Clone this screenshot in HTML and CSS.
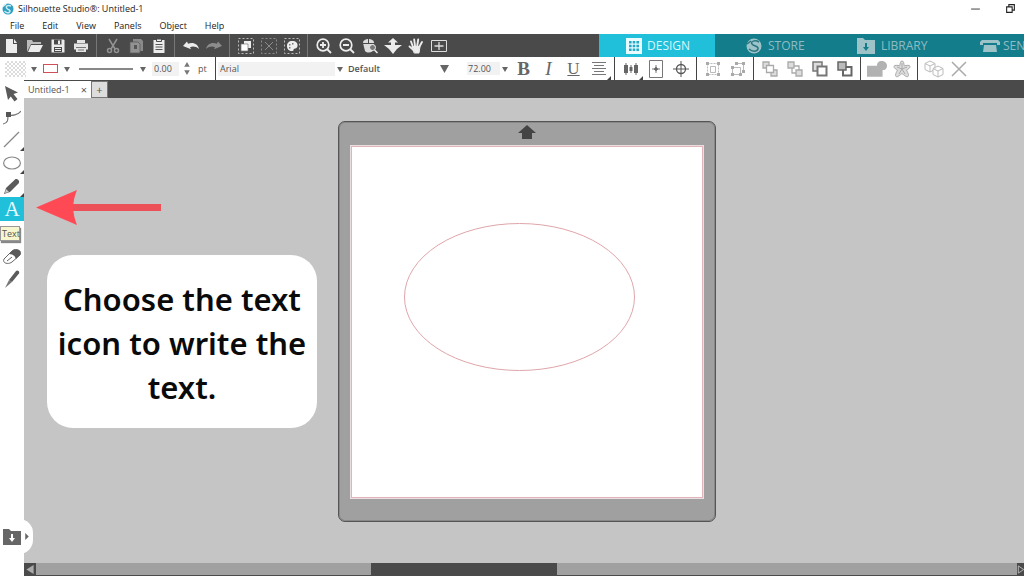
FILE: index.html
```html
<!DOCTYPE html>
<html lang="en">
<head>
<meta charset="utf-8">
<title>Silhouette Studio®: Untitled-1</title>
<link rel="stylesheet" href="styles.css">
</head>
<body>
<div class="app">
  <header class="titlebar">
    <svg class="app-logo" viewBox="0 0 12 12"><circle cx="6" cy="6" r="5.5" fill="#2e9fc0"/><path d="M9 3C6 1.500 3 3.500 5 5.500S9 7 7.500 9 3.500 9 2.500 8" fill="none" stroke="#c9edf5" stroke-width="1.500"/><path d="M1 3.500L4 1" stroke="#d7f1f7" stroke-width="1.500"/></svg>
    <h1 class="app-title">Silhouette Studio®: Untitled-1</h1>
    <div class="window-controls">
      <button class="window-button" aria-label="Minimize"><svg viewBox="0 0 10 10"><path d="M1 5.500h8" stroke="#555"/></svg></button>
      <button class="window-button" aria-label="Restore"><svg viewBox="0 0 10 10" fill="none" stroke="#222"><path d="M1.500 3.500h5v5h-5zM3.500 3V1.500h5v5H7"/></svg></button>
    </div>
  </header>

  <nav class="menubar">
    <button>File</button><button>Edit</button><button>View</button><button>Panels</button><button>Object</button><button>Help</button>
  </nav>

  <div class="toolbar">
    <div class="toolbar-group">
      <button class="tool-button" aria-label="New"><svg viewBox="0 0 16 16" fill="#ececec"><path d="M2 1h7v5h4v9H2z"/><path d="M10 1l3 4h-3z"/></svg></button>
      <button class="tool-button" aria-label="Open"><svg viewBox="0 0 16 16"><path d="M0 14V2h5l1 2h8v2H4z" fill="#bbb"/><path d="M4 7h12l-3.500 7H1z" fill="#ececec"/></svg></button>
      <button class="tool-button" aria-label="Save"><svg viewBox="0 0 16 16"><path d="M1.500 1.500h12l1 1v12h-13z" fill="#ececec"/><path d="M4 1.500h7.500v5H4zM4 9h8v5H4z" fill="#4a4a4a"/><path d="M8 2.500h2V6H8zM5 10h6v1H5zm0 2h6v1H5z" fill="#ececec"/></svg></button>
      <button class="tool-button" aria-label="Print"><svg viewBox="0 0 16 16"><path d="M4 2h8v3H4zM1 5.500h14v6h-2V14H3v-2.500H1z" fill="#e4e4e4"/><path d="M3 9.500h10M5 12h6" stroke="#777"/></svg></button>
    </div>
    <div class="toolbar-group">
      <button class="tool-button" aria-label="Cut"><svg viewBox="0 0 16 16" fill="none" stroke="#929292" stroke-width="1.500"><path d="M4 1l6 10M12 1L6 11"/><circle cx="4.500" cy="12.500" r="2"/><circle cx="11.500" cy="12.500" r="2"/></svg></button>
      <button class="tool-button" aria-label="Copy"><svg viewBox="0 0 16 16"><path d="M5 1h8l2 2v10H5z" fill="#8a8a8a"/><path d="M2 4h8l2 2v9H2z" fill="#929292" stroke="#5a5a5a" stroke-width=".8"/><path d="M6 7h3v4H6z" fill="#555"/></svg></button>
      <button class="tool-button" aria-label="Paste"><svg viewBox="0 0 16 16"><path d="M2.500 2h11v13h-11z" fill="#ececec"/><path d="M5.500 1h5v2.500h-5z" fill="#ececec" stroke="#4a4a4a"/><path d="M4.500 6.500h7M4.500 9h7M4.500 11.500h7" stroke="#555"/></svg></button>
    </div>
    <div class="toolbar-group">
      <button class="tool-button" aria-label="Undo"><svg viewBox="0 0 16 16"><path d="M0 8l4-4.500 1 2.200c5-2 10 0 11 5.300-3-2.500-6-3-9-1.800l1 2z" fill="#ececec"/></svg></button>
      <button class="tool-button" aria-label="Redo"><svg viewBox="0 0 16 16"><path d="M16 8l-4-4.500-1 2.200C6 3.700 1 5.700 0 11c3-2.500 6-3 9-1.800l-1 2z" fill="#8c8c8c"/></svg></button>
    </div>
    <div class="toolbar-group">
      <button class="tool-button" aria-label="Select all"><svg viewBox="0 0 16 16"><path d="M.500.500h15v15H.500z" fill="none" stroke="#bbb" stroke-dasharray="2 2"/><path d="M6 3h7v7H6z" fill="#eee"/><path d="M3 6h7v7H3z" fill="#fff" stroke="#777" stroke-width=".7"/></svg></button>
      <button class="tool-button" aria-label="Deselect all"><svg viewBox="0 0 16 16" fill="none" stroke="#8c8c8c"><path d="M.500.500h15v15H.500z" stroke-dasharray="2 2"/><path d="M4 4l8 8M12 4l-8 8"/></svg></button>
      <button class="tool-button" aria-label="Select by color"><svg viewBox="0 0 16 16"><path d="M.500.500h15v15H.500z" fill="none" stroke="#bbb" stroke-dasharray="2 2"/><path d="M8 3c4 0 6 2 5.500 5S11 10 10 11s0 2-2 2c-3 0-5-2-5-5s2-5 5-5z" fill="#eee"/><path d="M5 6h1.500v1.500H5zM8 5h1.500v1.500H8zM5 9h1.500v1.500H5z" fill="#777"/></svg></button>
    </div>
    <div class="toolbar-group">
      <button class="tool-button" aria-label="Zoom in"><svg viewBox="0 0 16 16" fill="none" stroke="#ececec"><circle cx="7" cy="7" r="5.800" stroke-width="1.700"/><path d="M4 7h6M7 4v6M11 11l4 4" stroke-width="1.800"/></svg></button>
      <button class="tool-button" aria-label="Zoom out"><svg viewBox="0 0 16 16" fill="none" stroke="#ececec"><circle cx="7" cy="7" r="5.800" stroke-width="1.700"/><path d="M4 7h6M11 11l4 4" stroke-width="1.800"/></svg></button>
      <button class="tool-button" aria-label="Zoom selection"><svg viewBox="0 0 16 16"><path d="M1 5c0-3 3-4 5.500-4S12 2 12 5l-1 8c-3 2-6 2-8 0z" fill="#ddd"/><path d="M1 5.500h11M6.500 1v5" stroke="#4a4a4a"/><circle cx="10.500" cy="9.500" r="3" fill="#777" stroke="#eee"/><path d="M12.500 12l3 3" stroke="#eee" stroke-width="1.500"/></svg></button>
      <button class="tool-button tool-button-wide" aria-label="Drag zoom"><svg viewBox="0 0 18 16" fill="#ececec"><path d="M9 0l5 4.500h-3V7h7l-5 4-4 5-4-5-5-4h7V4.500H4z"/></svg></button>
      <button class="tool-button" aria-label="Pan"><svg viewBox="0 0 16 16" fill="none" stroke="#ececec" stroke-linecap="round"><path d="M5 9L3 3.500M7 8L6.200 1.500M9.200 8l1-6.500M11.500 8.500L14 4M5.500 12L1.500 8.500" stroke-width="1.900"/><path d="M4.500 8.500h7.500L11 15H6.500z" fill="#ececec"/></svg></button>
      <button class="tool-button" aria-label="Fit to page"><svg viewBox="0 0 16 16" fill="none" stroke="#ddd"><path d="M.500 2.500h15v11H.500z"/><path d="M3.500 8h9M8 4v8" stroke-width="1.300"/></svg></button>
    </div>
    <div class="mode-tabs">
      <button class="mode-tab mode-tab-active"><svg class="mode-icon" viewBox="0 0 16 16"><path d="M0 0h16v16H0z" fill="#e9fbff"/><path d="M3 3h2.600v2.600H3zm3.700 0h2.600v2.600H6.700zm3.700 0H13v2.600h-2.600zM3 6.700h2.600v2.600H3zm3.700 0h2.600v2.600H6.700zm3.700 0H13v2.600h-2.600zM3 10.400h2.600V13H3zm3.700 0h2.600V13H6.700zm3.700 0H13V13h-2.600z" fill="#23a9c6"/></svg>DESIGN</button>
      <button class="mode-tab mode-tab-store"><svg class="mode-icon" viewBox="0 0 16 16"><circle cx="8" cy="8" r="7.500" fill="#9dc3c9"/><path d="M13 4C9 1.500 4 3.500 6 6s7 2 6 5-6 3-9 0M1 6l4-3" fill="none" stroke="#2a7582" stroke-width="1.500"/></svg>STORE</button>
      <button class="mode-tab mode-tab-library"><svg class="mode-icon mode-icon-wide" viewBox="0 0 18 16"><path d="M0 0h6l2 2h10v14H0z" fill="#9dc3c9"/><path d="M8 5h2v4h2l-3 4-3-4h2z" fill="#147d8b"/></svg>LIBRARY</button>
      <button class="mode-tab mode-tab-send"><svg class="mode-icon mode-icon-large" viewBox="0 0 20 16"><path d="M2 2h16l2 2v3h-3V6H3v1H0V4zM4 7h12l1 7H3z" fill="#9dc3c9"/><path d="M3 5.500h14" stroke="#147d8b"/></svg>SEN</button>
    </div>
  </div>

  <div class="formatbar">
    <div class="shape-controls">
      <button class="fill-swatch" aria-label="Fill color"></button>
      <svg class="caret" viewBox="0 0 6 6"><path d="M0 1h6L3 6z"/></svg>
      <button class="line-swatch" aria-label="Line color"></button>
      <svg class="caret" viewBox="0 0 6 6"><path d="M0 1h6L3 6z"/></svg>
      <button class="line-style" aria-label="Line style"></button>
      <svg class="caret" viewBox="0 0 6 6"><path d="M0 1h6L3 6z"/></svg>
      <input class="line-width" id="line-width" value="0.00">
      <svg class="spinner" viewBox="0 0 6 14"><path d="M0 5h6L3 0zM0 9h6l-3 5z"/></svg>
      <label for="line-width">pt</label>
    </div>
    <div class="font-controls">
      <select class="font-family" aria-label="Font"><option>Arial</option></select>
      <svg class="caret" viewBox="0 0 6 6"><path d="M0 1h6L3 6z"/></svg>
      <select class="font-style" aria-label="Font style"><option>Default</option></select>
      <svg class="caret caret-large" viewBox="0 0 8 7"><path d="M0 0h8L4 7z"/></svg>
      <input class="font-size" aria-label="Font size" value="72.00">
      <svg class="caret" viewBox="0 0 6 6"><path d="M0 1h6L3 6z"/></svg>
    </div>
    <div class="format-group">
      <button class="format-button letter letter-bold" aria-label="Bold">B</button>
      <button class="format-button letter letter-italic" aria-label="Italic">I</button>
      <button class="format-button letter letter-underline" aria-label="Underline">U</button>
      <button class="format-button has-menu" aria-label="Text alignment"><svg viewBox="0 0 16 16" stroke="#777"><path d="M1 1.500h14M3 4.500h10M1 7.500h14M3 10.500h10M1 13.500h14"/></svg></button>
    </div>
    <div class="format-group">
      <button class="format-button has-menu" aria-label="Align"><svg viewBox="0 0 16 16" fill="#666"><path d="M1 4h4v8H1zM6.500 6h3v4h-3zM11 4h4v8h-4z"/><path d="M3 2v12M8 4v8M13 2v12" stroke="#666"/></svg></button>
      <button class="format-button" aria-label="Center to page"><svg class="icon-tall" viewBox="0 0 16 18" fill="none" stroke="#777"><path d="M1.500.500h13v17h-13z"/><path d="M8 5v8M4 9h8"/><path d="M8 7l2 2-2 2-2-2z" fill="#666"/></svg></button>
      <button class="format-button" aria-label="Registration marks"><svg viewBox="0 0 16 16" fill="none" stroke="#555"><circle cx="8" cy="8" r="4.500" stroke-width="1.300"/><path d="M8 0v16M0 8h16"/></svg></button>
    </div>
    <div class="format-group">
      <button class="format-button" aria-label="Group"><svg viewBox="0 0 16 16" fill="none" stroke="#bbb"><path d="M2.500 2.500h11v11h-11z" stroke-dasharray="2 1"/><path d="M5.500 5.500h5v6h-5z"/><path d="M1 1h3v3H1zM12 1h3v3h-3zM1 12h3v3H1zM12 12h3v3h-3z" fill="#aaa" stroke="none"/></svg></button>
      <button class="format-button" aria-label="Ungroup"><svg viewBox="0 0 16 16" fill="none" stroke="#bbb"><path d="M5.500 2.500h8v8M2.500 6.500h8v7h-8z"/><path d="M12 1h3v3h-3zM12 9h3v3h-3zM5 1h3v3H5zM1 5h3v3H1zM1 12h3v3H1zM9 12h3v3H9z" fill="#aaa" stroke="none"/></svg></button>
    </div>
    <div class="format-group">
      <button class="format-button" aria-label="Bring to front"><svg viewBox="0 0 16 16" fill="#ddd" stroke="#aaa" stroke-width="1.300"><path d="M1 1h6v6H1zM9 9h6v6H9z"/><path d="M4.500 4.500h7v7h-7z" fill="#fff"/></svg></button>
      <button class="format-button" aria-label="Send to back"><svg viewBox="0 0 16 16" fill="#ddd" stroke="#aaa" stroke-width="1.300"><path d="M5 5h7v7H5z" fill="#fff"/><path d="M1 1h6v6H1zM9 9h6v6H9z"/></svg></button>
      <button class="format-button" aria-label="Bring forward"><svg viewBox="0 0 16 16" fill="#ddd" stroke="#777" stroke-width="1.500"><path d="M1 1h9v9H1z"/><path d="M5.500 5.500h9v9h-9z" fill="#fff" stroke-width="2"/></svg></button>
      <button class="format-button" aria-label="Send backward"><svg viewBox="0 0 16 16" fill="none" stroke="#666" stroke-width="1.500"><path d="M6 6h8.500v8.500H6z" stroke-width="2"/><path d="M1 1h8v8H1z" fill="#bbb"/></svg></button>
    </div>
    <div class="format-group">
      <button class="format-button" aria-label="Weld"><svg class="icon-large" viewBox="0 0 18 16" fill="#b2b2b2"><path d="M0 5h9c0-6 9-5 9 0 0 3-2 4-4 4v6H0z"/></svg></button>
      <button class="format-button" aria-label="Offset"><svg class="icon-large" viewBox="0 0 18 18" fill="#ddd" stroke="#aaa" stroke-linejoin="round"><path d="M9 1c2 0 1.800 3 2.200 4.800 2-.3 5.800-1.300 5.800.7s-2 2.500-3.500 3.500c1 2 3 5.500 1.500 6.500s-4-1.500-6-3c-2 1.500-4.500 4-6 3s.5-4.500 1.500-6.500C3 9 1 8.500 1 6.500s3.800-1 5.800-.7C7.200 4 7 1 9 1z"/><path d="M9 3v6l5-2M9 9l3 5M9 9l-3 5M9 9L4 7" fill="none"/></svg></button>
    </div>
    <div class="format-group format-group-last">
      <button class="format-button" aria-label="3D shapes"><svg class="icon-large" viewBox="0 0 20 18" fill="#fff" stroke="#bbb"><path d="M1 3.500L6 1l5 2.500v6L6 12 1 9.500zM1 3.500L6 6l5-2.500M6 6v6"/><path d="M9 8.500L14 6l5 2.500v6L14 17l-5-2.500zM9 8.500l5 2.500 5-2.500M14 11v6"/></svg></button>
      <button class="format-button" aria-label="Close"><svg viewBox="0 0 16 16" stroke="#aaa" stroke-width="1.500"><path d="M1 1l14 14M15 1L1 15"/></svg></button>
    </div>
  </div>

  <main class="workspace">
    <aside class="toolbox">
      <button class="draw-tool" aria-label="Select"><svg viewBox="0 0 18 18"><path d="M2 1l13 6.500-4.500 1.500 4 5-3 2.500-3.700-5L5 15z" fill="#5a5a5a"/></svg></button>
      <button class="draw-tool" aria-label="Edit points"><svg viewBox="0 0 18 18"><path d="M0 16c5-1 5-4 5-9 4 1 10 0 13-4" fill="none" stroke="#777" stroke-width="1.200"/><path d="M3 4h5v5H3z" fill="#555"/></svg></button>
      <button class="draw-tool has-menu" aria-label="Line"><svg viewBox="0 0 18 18"><path d="M1 16L16 1" stroke="#888" stroke-width="1.200"/></svg></button>
      <button class="draw-tool has-menu" aria-label="Ellipse"><svg viewBox="0 0 18 18"><ellipse cx="9" cy="9" rx="8.400" ry="6" fill="none" stroke="#888" stroke-width="1.200"/></svg></button>
      <button class="draw-tool has-menu" aria-label="Freehand"><svg viewBox="0 0 18 18"><path d="M1 17l2-6 9-8.500c2-1.500 5.500 1.500 3.500 4L7 15z" fill="#5a5a5a"/><path d="M3 12l3 3-4 1z" fill="#ccc"/></svg></button>
      <button class="draw-tool draw-tool-active" aria-label="Text">A<span class="tooltip">Text</span></button>
      <button class="draw-tool" aria-label="Note"></button>
      <button class="draw-tool" aria-label="Eraser"><svg viewBox="0 0 18 18"><path d="M1 12L9 4c3-3 11-1 8 4l-8 7c-4 3-10 1-8-3z" fill="#fff" stroke="#666"/><path d="M6 7l3-3c3-3 11-1 8 4l-4 4c-1-3-3-5-7-5z" fill="#5a5a5a"/><path d="M4 14l5-4" stroke="#666"/></svg></button>
      <button class="draw-tool" aria-label="Knife"><svg viewBox="0 0 18 18"><path d="M2 18l4-8 3 2z" fill="#777"/><path d="M6 10l7-9c1.500-1.500 4 .5 3 2.500L9 12z" fill="#5a5a5a"/></svg></button>
      <button class="library-flyout" aria-label="Library"><svg class="library-icon" viewBox="0 0 18 16"><path d="M0 0h6l2 2h10v14H0z" fill="#666"/><path d="M8 5h2v4h2l-3 4-3-4h2z" fill="#fff"/></svg><svg class="library-caret" viewBox="0 0 4 8"><path d="M0 0l4 4-4 4z" fill="#666"/></svg></button>
    </aside>

    <section class="document">
      <div class="document-tabs">
        <div class="document-tab"><span>Untitled-1</span><button aria-label="Close tab">×</button></div>
        <button class="add-tab" aria-label="New tab">+</button>
      </div>
      <div class="canvas">
        <svg class="pointer-arrow" viewBox="0 0 126 36"><path d="M37 14h88v7H37z" fill="#ec5059"/><path d="M0 17.500L41 0c-5 12-5 23 0 35z" fill="#ff4a56"/></svg>
        <p class="callout">Choose the text icon to write the text.</p>
        <div class="mat">
          <svg class="mat-arrow" viewBox="0 0 18 14"><path d="M9 0l9 8h-4v6H4V8H0z" fill="#444"/></svg>
          <div class="page">
            <svg class="ellipse" viewBox="0 0 231 148"><ellipse cx="115.500" cy="74" rx="115" ry="73.500" fill="none" stroke="#dfa5aa"/></svg>
          </div>
        </div>
      </div>
      <div class="scrollbar">
        <button class="scroll-button" aria-label="Scroll left"><svg viewBox="0 0 8 10"><path d="M8 0v10L0 5z" fill="#aaa"/></svg></button>
        <div class="scroll-track"><div class="scroll-thumb"></div></div>
        <button class="scroll-button scroll-right" aria-label="Scroll right"><svg viewBox="0 0 8 10"><path d="M1 1v8l6-4z" fill="none" stroke="#bbb"/></svg></button>
      </div>
    </section>
  </main>
</div>
</body>
</html>
```
FILE: styles.css
```css
* { box-sizing: border-box; }

body {
  margin: 0;
  font-family: "Open Sans", "Noto Sans", sans-serif;
  font-size: 9px;
  color: #222;
}

button, input, select {
  margin: 0;
  padding: 0;
  border: 0;
  background: none;
  color: inherit;
  font: inherit;
}

svg { display: block; flex: none; }

.app {
  display: flex;
  flex-direction: column;
  height: 100vh;
  overflow: hidden;
  background: #fff;
}

/* Title and menus */
.titlebar {
  display: flex;
  align-items: center;
  gap: 4px;
  height: 17px;
  padding-left: 2px;
}
.app-logo { width: 12px; height: 12px; }
.app-title { margin: 0; font-size: 9px; font-weight: 400; }
.window-controls { display: flex; gap: 24px; margin-left: auto; padding-right: 8px; }
.window-button svg { width: 11px; height: 11px; }

.menubar {
  display: flex;
  align-items: center;
  gap: 18px;
  height: 17px;
  padding-left: 10px;
}

/* Main toolbar */
.toolbar {
  display: flex;
  height: 23px;
  background: #4a4a4a;
}
.toolbar-group { display: flex; align-items: center; }
.toolbar-group + .toolbar-group { margin-left: 4px; padding-left: 4px; border-left: 1px solid #777; }
.tool-button { display: flex; justify-content: center; width: 23px; }
.tool-button svg { width: 16px; height: 16px; }
.tool-button-wide svg { width: 18px; }

.mode-tabs {
  display: flex;
  width: 425px;
  margin-left: auto;
  overflow: hidden;
  background: #147d8b;
}
.mode-tab {
  display: flex;
  flex: none;
  align-items: center;
  gap: 6px;
  padding-left: 31px;
  color: #8fbcc3;
  font-size: 12px;
}
.mode-tab-active { width: 116px; padding-left: 27px; background: #20bfda; color: #d8f6fb; gap: 5px; }
.mode-tab-store { width: 114px; }
.mode-tab-library { width: 120px; padding-left: 28px; }
.mode-tab-send { gap: 3px; }
.mode-icon { width: 16px; height: 16px; }
.mode-icon-wide { width: 18px; }
.mode-icon-large { width: 20px; }

/* Format bar */
.formatbar {
  display: flex;
  height: 23px;
  color: #555;
}
.shape-controls, .font-controls, .format-group { display: flex; align-items: center; }
.shape-controls { width: 216px; padding-left: 5px; border-right: 1px solid #444; }
.fill-swatch {
  width: 21px;
  height: 16px;
  margin-right: 5px;
  background: repeating-conic-gradient(#dcdcdc 0 25%, #fff 0 50%) 0 0 / 4px 4px;
}
.caret { width: 6px; height: 6px; fill: #666; }
.line-swatch { width: 15px; height: 9px; margin: 0 6px; border: 1px solid #d0505a; }
.line-style { width: 54px; height: 2px; margin: 0 7px 0 9px; background: #888; }
.line-width { width: 27px; height: 14px; margin: 0 5px 0 6px; padding-left: 2px; background: #f2f2f2; }
.spinner { width: 6px; height: 13px; margin-right: 8px; fill: #777; }

.font-controls { width: 295px; padding-left: 2px; }
.font-family, .font-style { appearance: none; height: 14px; }
.font-family { width: 117px; margin-right: 2px; padding-left: 2px; background: #f2f2f2; }
.font-style { width: 91px; margin: 0 1px 0 5px; font-weight: 600; }
.caret-large { width: 9px; height: 8px; }
.font-size { width: 33px; height: 13px; margin: 0 2px 0 18px; padding-left: 1px; background: #f2f2f2; }

.format-group { padding-right: 3px; border-right: 1px solid #444; }
.format-group + .format-group { padding-left: 3px; }
.format-group-last { border: 0; }
.format-button {
  position: relative;
  display: flex;
  align-items: center;
  justify-content: center;
  width: 25px;
  height: 23px;
}
.format-button svg { width: 16px; height: 16px; }
.format-button .icon-large { width: 20px; height: 18px; }
.format-button .icon-tall { height: 18px; }
.letter { color: #666; font-family: "Liberation Serif", serif; font-size: 19px; }
.letter-bold { font-weight: 700; }
.letter-italic { font-style: italic; }
.letter-underline { font-size: 17px; text-decoration: underline; }

.has-menu::after {
  content: "";
  position: absolute;
  right: 0;
  bottom: 0;
  border: 2px solid transparent;
  border-right-color: #444;
  border-bottom-color: #444;
}

/* Workspace */
.workspace { display: flex; flex: 1; min-height: 0; }
.toolbox {
  position: relative;
  z-index: 1;
  display: flex;
  flex: none;
  flex-direction: column;
  width: 24px;
  padding-top: 2px;
  background: #fff;
}
.draw-tool {
  position: relative;
  display: flex;
  flex: none;
  align-items: center;
  justify-content: center;
  height: 23px;
}
.draw-tool svg { width: 18px; height: 18px; }
.draw-tool-active {
  height: 24px;
  background: #20bfda;
  color: #e9fbff;
  font-family: "Liberation Serif", serif;
  font-size: 21px;
}
.tooltip {
  position: absolute;
  top: 29px;
  left: 0;
  width: 20px;
  height: 15px;
  padding-left: 1px;
  border: 1px solid #999;
  background: #f7f6cf;
  box-shadow: 1px 2px 1px #888;
  color: #555;
  font-family: "Open Sans", sans-serif;
  font-size: 9px;
  line-height: 13px;
  text-align: left;
}
.library-flyout {
  position: absolute;
  bottom: 22px;
  left: 0;
  display: flex;
  align-items: center;
  gap: 4px;
  width: 33px;
  height: 35px;
  padding-left: 3px;
  border-radius: 0 14px 14px 0;
  background: #fff;
}
.library-icon { width: 18px; height: 16px; }
.library-caret { width: 4px; height: 7px; }

.document { display: flex; flex: 1; flex-direction: column; min-width: 0; }
.document-tabs { display: flex; height: 18px; padding-top: 1px; background: #4a4a4a; color: #555; }
.document-tab {
  display: flex;
  align-items: center;
  justify-content: space-between;
  width: 67px;
  padding: 0 4px;
  background: #fff;
}
.document-tab button { font-size: 11px; }
.add-tab { width: 17px; border: 1px solid #777; background: #ddd; font-size: 11px; line-height: 11px; }

.canvas { position: relative; flex: 1; min-height: 0; overflow: hidden; background: #c5c5c5; }
.pointer-arrow { position: absolute; top: 92px; left: 12px; width: 126px; height: 36px; }
.callout {
  position: absolute;
  top: 157px;
  left: 23px;
  width: 270px;
  margin: 0;
  padding: 22px 4px 19px;
  border-radius: 26px;
  background: #fff;
  color: #0a0a0a;
  font-family: "Noto Sans", sans-serif;
  font-size: 31px;
  font-weight: 600;
  line-height: 44px;
  text-align: center;
}
.mat {
  position: absolute;
  top: 23px;
  left: 314px;
  display: flex;
  flex-direction: column;
  align-items: center;
  gap: 6px;
  width: 378px;
  padding: 3px 0 22px;
  border: 1px solid #555;
  border-radius: 7px;
  background: #a0a0a0;
  box-shadow: inset 0 0 0 1px #888;
}
.mat-arrow { width: 18px; height: 14px; }
.page {
  position: relative;
  width: 354px;
  height: 354px;
  border: 1px solid #eadfe0;
  outline: 1px solid #e0b4b8;
  outline-offset: -2px;
  background: #fff;
}
.ellipse { position: absolute; top: 77px; left: 53px; width: 231px; height: 148px; }

.scrollbar { display: flex; height: 13px; border-bottom: 1px solid #4a4a4a; background: #a0a0a0; }
.scroll-button { display: flex; align-items: center; justify-content: center; width: 12px; background: #4a4a4a; }
.scroll-button svg { width: 8px; height: 9px; }
.scroll-right { justify-content: flex-start; width: 7px; overflow: hidden; }
.scroll-track { display: grid; flex: 1; grid-template-columns: 335fr 186fr 460fr; }
.scroll-thumb { grid-column: 2; background: #4a4a4a; }
```
